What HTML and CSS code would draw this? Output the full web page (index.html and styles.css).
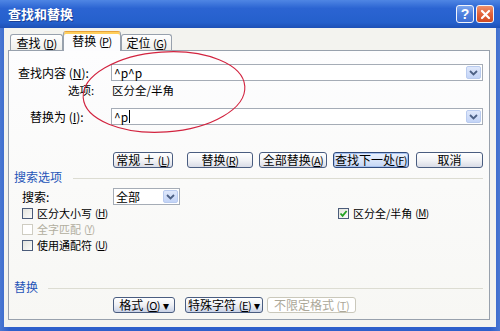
FILE: index.html
```html
<!DOCTYPE html>
<html lang="zh-CN">

<head>
    <meta charset="UTF-8">
    <title>查找和替换</title>
    <link rel="stylesheet" href="styles.css">
</head>

<body>
    <div class="window">
        <!-- Title bar -->
        <div class="titlebar">
            <span class="title">查找和替换</span>
            <div class="caption-btns">
                <span class="cap-btn help">?</span>
                <span class="cap-btn close">
                    <svg width="11" height="11" viewBox="0 0 11 11"><path d="M2 2 L9 9 M9 2 L2 9" stroke="#fff" stroke-width="2.2" stroke-linecap="round"/></svg>
                </span>
            </div>
        </div>

        <div class="client">
            <!-- Tabs -->
            <div class="tabs">
                <div class="tab tab-find">查找 <span class="mn">(<u>D</u>)</span></div>
                <div class="tab tab-replace active">替换 <span class="mn">(<u>P</u>)</span></div>
                <div class="tab tab-goto">定位 <span class="mn">(<u>G</u>)</span></div>
            </div>

            <div class="panel">
                <div class="field-row find-row">
                    <span class="field-label find-label">查找内容 (<u>N</u>):</span>
                    <div class="combo wide">
                        <span class="combo-text">^p^p</span>
                        <span class="drop-btn"><svg width="9" height="6" viewBox="0 0 9 6"><path d="M1 1 L4.5 4.5 L8 1" fill="none" stroke="#4d6185" stroke-width="1.8"/></svg></span>
                    </div>
                </div>
                <div class="opt-row">
                    <span class="opt-label">选项:</span>
                    <span class="opt-value">区分全/半角</span>
                </div>
                <div class="field-row replace-row">
                    <span class="field-label replace-label">替换为 (<u>I</u>):</span>
                    <div class="combo wide">
                        <span class="combo-text">^p<span class="caret"></span></span>
                        <span class="drop-btn"><svg width="9" height="6" viewBox="0 0 9 6"><path d="M1 1 L4.5 4.5 L8 1" fill="none" stroke="#4d6185" stroke-width="1.8"/></svg></span>
                    </div>
                </div>

                <!-- Action buttons -->
                <div class="btn-row">
                    <button class="btn b-less">常规 ± <span class="mn">(<u>L</u>)</span></button>
                    <button class="btn b-replace">替换<span class="mn">(<u>R</u>)</span></button>
                    <button class="btn b-all">全部替换<span class="mn">(<u>A</u>)</span></button>
                    <button class="btn b-next default">查找下一处<span class="mn">(<u>F</u>)</span></button>
                    <button class="btn b-cancel">取消</button>
                </div>

                <!-- Search options -->
                <div class="group-label g-search"><span>搜索选项</span></div>
                <div class="search-row">
                    <span class="search-label">搜索:</span>
                    <div class="combo narrow">
                        <span class="combo-text">全部</span>
                        <span class="drop-btn"><svg width="9" height="6" viewBox="0 0 9 6"><path d="M1 1 L4.5 4.5 L8 1" fill="none" stroke="#4d6185" stroke-width="1.8"/></svg></span>
                    </div>
                </div>
                <div class="check-row">
                    <label class="check"><span class="box"></span>区分大小写 <span class="mn">(<u>H</u>)</span></label>
                    <label class="check"><span class="box checked"><svg width="9" height="9" viewBox="0 0 9 9"><path d="M1.5 4.5 L3.6 6.8 L7.6 2" fill="none" stroke="#21a121" stroke-width="1.8"/></svg></span>区分全/半角 <span class="mn">(<u>M</u>)</span></label>
                </div>
                <div class="check-row">
                    <label class="check disabled"><span class="box"></span>全字匹配 <span class="mn">(<u>Y</u>)</span></label>
                </div>
                <div class="check-row">
                    <label class="check"><span class="box"></span>使用通配符 <span class="mn">(<u>U</u>)</span></label>
                </div>

                <!-- Replace section -->
                <div class="group-label g-replace"><span>替换</span></div>
                <div class="btn-row bottom-row">
                    <button class="btn b-format">格式 <span class="mn">(<u>O</u>)</span> ▾</button>
                    <button class="btn b-special">特殊字符 <span class="mn">(<u>E</u>)</span> ▾</button>
                    <button class="btn b-nofmt" disabled>不限定格式 <span class="mn">(<u>T</u>)</span></button>
                </div>
            </div>
        </div>

        <!-- Hand-drawn annotation -->
        <svg class="annotation" width="500" height="331" viewBox="0 0 500 331">
            <ellipse cx="164" cy="92" rx="81" ry="40" transform="rotate(-4 164 92)" fill="none" stroke="#d2233f" stroke-width="1.1"/>
        </svg>
    </div>
</body>

</html>
```

FILE: styles.css
```css
/* Reset */
* {
    margin: 0;
    padding: 0;
    box-sizing: border-box;
}

body {
    width: 500px;
    height: 331px;
    overflow: hidden;
    font-family: "Noto Sans CJK SC", "Liberation Sans", sans-serif;
    font-size: 12px;
    color: #000;
    background: #fff;
}

/* Window frame */
.window {
    position: relative;
    width: 500px;
    height: 331px;
    display: flex;
    flex-direction: column;
    background: linear-gradient(90deg, #4a78d2, #2d5fca 2%, #2d5fca 98%, #4a78d2);
}

.titlebar {
    height: 28px;
    display: flex;
    align-items: center;
    justify-content: space-between;
    padding: 0 6px 0 8px;
    background: linear-gradient(#4f86e4, #2b64d2 30%, #2560cc 80%, #1d50b6);
}

.title {
    color: #fff;
    font-size: 13px;
    font-weight: bold;
    line-height: 16px;
    text-shadow: 1px 1px 0 #1a3f96;
}

.caption-btns {
    display: flex;
    gap: 2px;
}

.cap-btn {
    width: 18px;
    height: 18px;
    border: 1px solid #f2f4fb;
    border-radius: 3px;
    display: flex;
    align-items: center;
    justify-content: center;
    color: #fff;
    font-family: "Liberation Sans", sans-serif;
    font-weight: bold;
    font-size: 14px;
}

.help {
    background: linear-gradient(#7ea7ee, #4f80de 50%, #3f6fd4);
}

.close {
    background: linear-gradient(#f0916c, #e2623a 50%, #cf4a22);
}

/* Mnemonic part of a label, e.g. (A) */
.mn {
    font-size: 11px;
    letter-spacing: -0.5px;
}

/* Client area */
.client {
    flex: 1;
    margin: 0 4px 4px 4px;
    padding: 0 6px 7px 4px;
    background: #f3f3ef;
    display: flex;
    flex-direction: column;
}

/* Tabs */
.tabs {
    height: 22px;
    display: flex;
    align-items: flex-end;
    padding-left: 2px;
}

.tab {
    height: 16px;
    border: 1px solid #98a1ad;
    border-bottom: none;
    border-radius: 3px 3px 0 0;
    background: linear-gradient(#ffffff, #eeeeea);
    text-align: center;
    line-height: 15px;
    white-space: nowrap;
}

.tab-find {
    width: 53px;
}

.tab-replace {
    width: 58px;
}

.tab-goto {
    width: 51px;
}

.tab.active {
    position: relative;
    z-index: 1;
    height: 20px;
    margin-bottom: -1px;
    border-top: 1px solid #e6a23c;
    box-shadow: inset 0 2px 0 #ffcf5c;
    background: #fcfcfe;
    line-height: 18px;
}

/* Tab panel */
.panel {
    height: 270px;
    border: 1px solid #98a1ad;
    background: linear-gradient(#fdfdfe, #f7f7f4);
    display: flex;
    flex-direction: column;
}

.field-row {
    height: 17px;
    display: flex;
    align-items: center;
}

.find-row {
    margin-top: 13px;
}

.replace-row {
    margin-top: 11px;
}

.field-label {
    line-height: 17px;
    white-space: nowrap;
}

.find-label {
    padding-left: 9px;
    width: 102px;
}

.replace-label {
    padding-left: 21px;
    width: 102px;
}

.combo {
    height: 17px;
    border: 1px solid #a5acb6;
    background: #fff;
    display: flex;
    align-items: center;
    justify-content: space-between;
    padding: 0 1px 0 2px;
}

.combo.wide {
    width: 372px;
}

.combo.narrow {
    width: 67px;
}

.combo-text {
    line-height: 15px;
    display: flex;
    align-items: center;
}

.caret {
    display: inline-block;
    width: 1px;
    height: 13px;
    margin-left: 1px;
    background: #000;
}

.drop-btn {
    width: 15px;
    height: 13px;
    border: 1px solid #b9cbef;
    border-radius: 2px;
    background: linear-gradient(#dfe8fb, #c3d4f7);
    display: flex;
    align-items: center;
    justify-content: center;
}

.opt-row {
    height: 14px;
    margin-top: 2px;
    display: flex;
    align-items: center;
    font-size: 11.5px;
    line-height: 14px;
}

.opt-label {
    padding-left: 59px;
    width: 103px;
}

/* Buttons */
.btn-row {
    height: 16px;
    margin-top: 27px;
    display: flex;
    gap: 6px;
    padding-left: 104px;
}

.btn {
    height: 16px;
    padding: 0;
    font-family: inherit;
    font-size: 12px;
    line-height: 14px;
    color: #000;
    white-space: nowrap;
    border: 1px solid #4a5d80;
    border-radius: 3px;
    background: linear-gradient(#ffffff, #f1f2f5 55%, #d9dce6);
    text-align: center;
}

.b-less {
    width: 60px;
    margin-right: 8px;
}

.b-replace {
    width: 66px;
}

.b-all {
    width: 68px;
}

.b-next {
    width: 76px;
}

.b-cancel {
    width: 67px;
    margin-left: 1px;
}

.btn.default {
    border-color: #2f4a7d;
    box-shadow: inset 0 0 0 1px #a9c3f0;
    background: linear-gradient(#eaf1fd, #d6e3fa 60%, #c4d5f4);
}

/* Group labels */
.group-label {
    height: 12px;
    margin-top: 3px;
    display: flex;
    align-items: center;
    padding-left: 5px;
    color: #2555b8;
    line-height: 12px;
}

.group-label::after {
    content: "";
    flex: 1;
    height: 1px;
    margin: 3px 6px 0 11px;
    background: #dcdcd2;
}

.g-replace {
    margin-top: 28px;
}

.g-replace::after {
    margin-left: 10px;
}

/* Search options */
.search-row {
    height: 17px;
    margin-top: 5px;
    display: flex;
    align-items: center;
}

.search-label {
    padding-left: 13px;
    width: 104px;
}

.check-row {
    height: 16px;
    display: grid;
    grid-template-columns: 316px auto;
    align-items: center;
    padding-left: 13px;
}

.check {
    display: flex;
    align-items: center;
    font-size: 11px;
    line-height: 16px;
    white-space: nowrap;
}

.check .mn {
    margin-left: 3px;
    font-size: 10px;
}

.box {
    width: 11px;
    height: 11px;
    margin-right: 4px;
    border: 1px solid #4b5c7a;
    background: linear-gradient(135deg, #e3e4de, #fbfbfa);
    display: flex;
    align-items: center;
    justify-content: center;
}

.check.disabled {
    color: #b1ae9f;
}

.check.disabled .box {
    border-color: #cfcdc2;
    background: #fff;
}

/* Replace section */
.bottom-row {
    margin-top: 4px;
    padding-left: 104px;
    gap: 0;
}

.b-format {
    width: 62px;
    margin-right: 10px;
    background: linear-gradient(#ffffff, #eef0f5 50%, #c9d2e6);
}

.b-special {
    width: 78px;
    margin-right: 4px;
    background: linear-gradient(#ffffff, #eef0f5 50%, #c9d2e6);
}

.b-nofmt {
    width: 89px;
    color: #aca899;
    border-color: #cac8bb;
    background: #fff;
}

/* Annotation overlay */
.annotation {
    position: absolute;
    left: 0;
    top: 0;
    pointer-events: none;
}
```
